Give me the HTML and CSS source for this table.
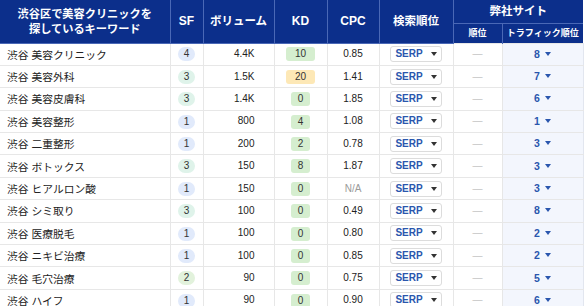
FILE: index.html
```html
<!DOCTYPE html>
<html lang="ja">
<head>
<meta charset="utf-8">
<link rel="stylesheet" href="styles.css">
</head>
<body>
<table class="kw">
  <colgroup>
    <col class="c-kw"><col class="c-sf"><col class="c-vol"><col class="c-kd"><col class="c-cpc"><col class="c-serp"><col class="c-rank"><col class="c-traffic">
  </colgroup>
  <thead>
    <tr class="h1">
      <th rowspan="2" class="title">渋谷区で美容クリニックを<br>探しているキーワード</th>
      <th rowspan="2" class="lat">SF</th>
      <th rowspan="2">ボリューム</th>
      <th rowspan="2" class="lat">KD</th>
      <th rowspan="2" class="lat">CPC</th>
      <th rowspan="2">検索順位</th>
      <th colspan="2" class="group">弊社サイト</th>
    </tr>
    <tr class="h2">
      <th class="sub">順位</th>
      <th class="sub">トラフィック順位</th>
    </tr>
  </thead>
  <tbody>
    <tr><td class="kwd">渋谷 美容クリニック</td><td class="ctr"><span class="sf blue">4</span></td><td class="vol">4.4K</td><td class="ctr"><span class="kd g w2">10</span></td><td class="ctr">0.85</td><td class="ctr"><span class="serp">SERP<i class="caret"></i></span></td><td class="ctr dash">—</td><td class="ctr tr"><span class="tv">8<i class="caret b"></i></span></td></tr>
    <tr><td class="kwd">渋谷 美容外科</td><td class="ctr"><span class="sf teal">3</span></td><td class="vol">1.5K</td><td class="ctr"><span class="kd y w2">20</span></td><td class="ctr">1.41</td><td class="ctr"><span class="serp">SERP<i class="caret"></i></span></td><td class="ctr dash">—</td><td class="ctr tr"><span class="tv">7<i class="caret b"></i></span></td></tr>
    <tr><td class="kwd">渋谷 美容皮膚科</td><td class="ctr"><span class="sf teal">3</span></td><td class="vol">1.4K</td><td class="ctr"><span class="kd g">0</span></td><td class="ctr">1.85</td><td class="ctr"><span class="serp">SERP<i class="caret"></i></span></td><td class="ctr dash">—</td><td class="ctr tr"><span class="tv">6<i class="caret b"></i></span></td></tr>
    <tr><td class="kwd">渋谷 美容整形</td><td class="ctr"><span class="sf blue">1</span></td><td class="vol">800</td><td class="ctr"><span class="kd g">4</span></td><td class="ctr">1.08</td><td class="ctr"><span class="serp">SERP<i class="caret"></i></span></td><td class="ctr dash">—</td><td class="ctr tr"><span class="tv">1<i class="caret b"></i></span></td></tr>
    <tr><td class="kwd">渋谷 二重整形</td><td class="ctr"><span class="sf blue">1</span></td><td class="vol">200</td><td class="ctr"><span class="kd g">2</span></td><td class="ctr">0.78</td><td class="ctr"><span class="serp">SERP<i class="caret"></i></span></td><td class="ctr dash">—</td><td class="ctr tr"><span class="tv">3<i class="caret b"></i></span></td></tr>
    <tr><td class="kwd">渋谷 ボトックス</td><td class="ctr"><span class="sf teal">3</span></td><td class="vol">150</td><td class="ctr"><span class="kd g">8</span></td><td class="ctr">1.87</td><td class="ctr"><span class="serp">SERP<i class="caret"></i></span></td><td class="ctr dash">—</td><td class="ctr tr"><span class="tv">3<i class="caret b"></i></span></td></tr>
    <tr><td class="kwd">渋谷 ヒアルロン酸</td><td class="ctr"><span class="sf blue">1</span></td><td class="vol">150</td><td class="ctr"><span class="kd g">0</span></td><td class="ctr na">N/A</td><td class="ctr"><span class="serp">SERP<i class="caret"></i></span></td><td class="ctr dash">—</td><td class="ctr tr"><span class="tv">3<i class="caret b"></i></span></td></tr>
    <tr><td class="kwd">渋谷 シミ取り</td><td class="ctr"><span class="sf teal">3</span></td><td class="vol">100</td><td class="ctr"><span class="kd g">0</span></td><td class="ctr">0.49</td><td class="ctr"><span class="serp">SERP<i class="caret"></i></span></td><td class="ctr dash">—</td><td class="ctr tr"><span class="tv">8<i class="caret b"></i></span></td></tr>
    <tr><td class="kwd">渋谷 医療脱毛</td><td class="ctr"><span class="sf blue">1</span></td><td class="vol">100</td><td class="ctr"><span class="kd g">0</span></td><td class="ctr">0.80</td><td class="ctr"><span class="serp">SERP<i class="caret"></i></span></td><td class="ctr dash">—</td><td class="ctr tr"><span class="tv">2<i class="caret b"></i></span></td></tr>
    <tr><td class="kwd">渋谷 ニキビ治療</td><td class="ctr"><span class="sf blue">1</span></td><td class="vol">100</td><td class="ctr"><span class="kd g">0</span></td><td class="ctr">0.85</td><td class="ctr"><span class="serp">SERP<i class="caret"></i></span></td><td class="ctr dash">—</td><td class="ctr tr"><span class="tv">2<i class="caret b"></i></span></td></tr>
    <tr><td class="kwd">渋谷 毛穴治療</td><td class="ctr"><span class="sf green">2</span></td><td class="vol">90</td><td class="ctr"><span class="kd g">0</span></td><td class="ctr">0.75</td><td class="ctr"><span class="serp">SERP<i class="caret"></i></span></td><td class="ctr dash">—</td><td class="ctr tr"><span class="tv">5<i class="caret b"></i></span></td></tr>
    <tr><td class="kwd">渋谷 ハイフ</td><td class="ctr"><span class="sf blue">1</span></td><td class="vol">90</td><td class="ctr"><span class="kd g">0</span></td><td class="ctr">0.90</td><td class="ctr"><span class="serp">SERP<i class="caret"></i></span></td><td class="ctr dash">—</td><td class="ctr tr"><span class="tv">6<i class="caret b"></i></span></td></tr>
  </tbody>
</table>
</body>
</html>
```

FILE: styles.css
```css
html, body {
  margin: 0;
  padding: 0;
  background: #ffffff;
}
body {
  font-family: "Liberation Sans", "Noto Sans CJK JP", sans-serif;
  color: #222;
  overflow: hidden;
}
.kw {
  border-collapse: collapse;
  table-layout: fixed;
  width: 583px;
  font-size: 10px;
}
.c-kw { width: 170px; }
.c-sf { width: 33px; }
.c-vol { width: 71px; }
.c-kd { width: 53px; }
.c-cpc { width: 52px; }
.c-serp { width: 74px; }
.c-rank { width: 49px; }
.c-traffic { width: 81px; }

thead th {
  background: #0c2f8b;
  color: #fff;
  font-weight: bold;
  font-size: 11.5px;
  border: 1px solid #4a68b6;
  border-top: none;
  padding: 0;
  text-align: center;
  line-height: 15px;
}
thead th.lat { font-size: 12px; }
thead tr.h1 { height: 23px; }
thead tr.h2 { height: 20px; }
thead th.title {
  font-size: 11.2px;
  line-height: 15px;
  padding-top: 2px;
  border-left: none;
}
thead th.group { font-size: 11.5px; }
thead th.sub { font-size: 9px; }
thead th:last-child { border-right: none; }
thead tr.h2 th { border-bottom: none; }

tbody tr { height: 22.4px; }
tbody td {
  border: 1px solid #e7e7e7;
  padding: 0;
  white-space: nowrap;
  line-height: 14px;
}
tbody td:first-child { border-left: none; }
td.kwd {
  padding-left: 7px;
  padding-top: 1px;
  font-size: 10.75px;
  color: #222;
}
td.ctr { text-align: center; }
td.vol {
  text-align: right;
  padding-right: 19px;
}
td.na { color: #9a9a9a; }
td.dash { color: #c6c6c6; }
td.tr {
  background: #f3f6fd;
  border-right: 1px solid #e2e6ef;
}

.sf {
  display: inline-block;
  min-width: 17px;
  height: 14px;
  line-height: 14px;
  border-radius: 7px;
  font-size: 10px;
  color: #333;
  vertical-align: middle;
}
.sf.blue { background: #e1eafb; }
.sf.teal { background: #dff3ea; }
.sf.green { background: #e2f2dc; }

.kd {
  display: inline-block;
  width: 19px;
  height: 14px;
  line-height: 14px;
  border-radius: 3px;
  font-size: 10px;
  color: #333;
  vertical-align: middle;
}
.kd.w2 { width: 29px; }
.kd.g { background: #d5eecf; }
.kd.y { background: #fde8b6; }

.serp {
  display: inline-flex;
  align-items: center;
  justify-content: center;
  gap: 8px;
  width: 50px;
  height: 14px;
  border: 1px solid #dcdcdc;
  border-radius: 3px;
  background: #fff;
  color: #2a56ad;
  font-weight: bold;
  font-size: 10px;
  vertical-align: middle;
}
.caret {
  display: inline-block;
  width: 0;
  height: 0;
  border-left: 3px solid transparent;
  border-right: 3px solid transparent;
  border-top: 4px solid #333;
}
.caret.b { border-top-color: #2a56ad; }
.tv {
  display: inline-flex;
  align-items: center;
  gap: 5px;
  color: #2a56ad;
  font-weight: bold;
  font-size: 10.5px;
}
```
